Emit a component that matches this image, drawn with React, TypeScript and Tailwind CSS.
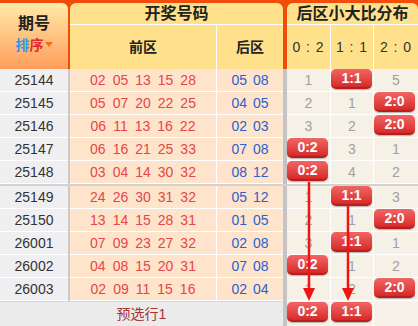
import React from "react";

type Cell = number | string;
const rows: { id: string; f: string[]; b: string[]; d: Cell[] }[] = [
  { id: "25144", f: ["02", "05", "13", "15", "28"], b: ["05", "08"], d: [1, "1:1", 5] },
  { id: "25145", f: ["05", "07", "20", "22", "25"], b: ["04", "05"], d: [2, 1, "2:0"] },
  { id: "25146", f: ["06", "11", "13", "16", "22"], b: ["02", "03"], d: [3, 2, "2:0"] },
  { id: "25147", f: ["06", "16", "21", "25", "33"], b: ["07", "08"], d: ["0:2", 3, 1] },
  { id: "25148", f: ["03", "04", "14", "30", "32"], b: ["08", "12"], d: ["0:2", 4, 2] },
  { id: "25149", f: ["24", "26", "30", "31", "32"], b: ["05", "12"], d: [1, "1:1", 3] },
  { id: "25150", f: ["13", "14", "15", "28", "31"], b: ["01", "05"], d: [2, 1, "2:0"] },
  { id: "26001", f: ["07", "09", "23", "27", "32"], b: ["02", "08"], d: [3, "1:1", 1] },
  { id: "26002", f: ["04", "08", "15", "20", "31"], b: ["07", "08"], d: ["0:2", 1, 2] },
  { id: "26003", f: ["02", "09", "11", "15", "16"], b: ["02", "04"], d: [1, 2, "2:0"] },
];

const distW = ["w-[43px]", "w-[42px]", "w-[44px]"];

function Badge({ t }: { t: string }) {
  return (
    <div className="w-[41px] h-[20px] rounded-[5px] bg-gradient-to-b from-[#f26464] to-[#d62828] border-b-2 border-[#b81e1e] text-white font-bold text-[14px] leading-[18px] text-center shadow-[0_1px_1px_rgba(0,0,0,0.25)]">
      {t}
    </div>
  );
}

function DistCell({ v, i }: { v: Cell | null; i: number }) {
  return (
    <div
      className={`${distW[i]} h-full flex ${
        typeof v === "string" ? "items-start justify-start" : "items-center justify-center"
      }`}
    >
      {typeof v === "string" ? (
        <Badge t={v} />
      ) : v === null ? null : (
        <span className="text-[14px] text-[#a0a0a0]">{v}</span>
      )}
    </div>
  );
}

function Row({ r }: { r: (typeof rows)[number] }) {
  return (
    <div className="flex h-[23px]">
      <div className="w-[68px] bg-[#efeff1] border-b border-white flex items-center justify-center text-[14px] text-[#333]">
        {r.id}
      </div>
      <div className="w-[2px] bg-[#c9c9c9]" />
      <div className="w-[146px] bg-[#ffe4cc] border-b border-white flex items-center justify-center gap-[7px] text-[14px] text-[#e54646]">
        {r.f.map((n, k) => (
          <span key={k}>{n}</span>
        ))}
      </div>
      <div className="w-[1px] bg-white" />
      <div className="w-[66px] bg-[#ffe4cc] border-b border-white flex items-center justify-center gap-[6px] text-[14px] text-[#2f5fc9]">
        {r.b.map((n, k) => (
          <span key={k}>{n}</span>
        ))}
      </div>
      <div className="w-[4px] bg-[#c4c4c4]" />
      <div className="flex bg-[#f6f1e6] border-b border-white">
        <DistCell v={r.d[0]} i={0} />
        <div className="w-[1px] bg-white" />
        <DistCell v={r.d[1]} i={1} />
        <div className="w-[1px] bg-white" />
        <DistCell v={r.d[2]} i={2} />
      </div>
    </div>
  );
}

export default function App() {
  return (
    <div
      className="relative w-[418px] h-[326px] overflow-hidden bg-white"
      style={{ fontFamily: '"Liberation Sans", "Noto Sans CJK SC", sans-serif' }}
    >
      {/* header */}
      <div className="flex h-[69px] bg-[#f24c0a] pt-[3px]">
        <div className="w-[68px] rounded-tr-[6px] bg-gradient-to-b from-[#ffeaa6] to-[#ff9c5c] flex flex-col items-center pt-[11px]">
          <div className="text-[16px] font-bold text-[#222] leading-[20px]">期号</div>
          <div className="flex items-center mt-[2px] text-[14px] font-bold leading-[18px]">
            <span className="text-[#3097ea]">排</span>
            <span className="text-[#e02a2a]">序</span>
            <svg width="8" height="6" viewBox="0 0 8 6" className="ml-[1px]">
              <path d="M0 0 H8 L4 5 Z" fill="#ff6a10" />
            </svg>
          </div>
        </div>
        <div className="w-[2px]" />
        <div className="w-[213px] rounded-t-[6px] bg-[#ffe18b] flex flex-col">
          <div className="h-[21px] flex items-center justify-center text-[16px] font-bold text-[#222]">开奖号码</div>
          <div className="h-[1px] bg-white" />
          <div className="flex flex-1">
            <div className="w-[146px] flex items-center justify-center text-[14px] font-bold text-[#222]">前区</div>
            <div className="w-[1px] bg-white" />
            <div className="w-[66px] flex items-center justify-center text-[14px] font-bold text-[#222]">后区</div>
          </div>
        </div>
        <div className="w-[4px]" />
        <div className="w-[131px] rounded-t-[6px] bg-[#ffe18b] flex flex-col">
          <div className="h-[21px] flex items-center justify-center text-[16px] font-bold text-[#222]">后区小大比分布</div>
          <div className="h-[1px] bg-white" />
          <div className="flex flex-1 text-[14px] text-[#333] tracking-[1px]">
            <div className="w-[43px] flex items-center justify-center">0 : 2</div>
            <div className="w-[1px] bg-white" />
            <div className="w-[42px] flex items-center justify-center">1 : 1</div>
            <div className="w-[1px] bg-white" />
            <div className="w-[44px] flex items-center justify-center">2 : 0</div>
          </div>
        </div>
      </div>

      {rows.slice(0, 5).map((r) => (
        <Row key={r.id} r={r} />
      ))}
      <div className="h-[2px] bg-[#d2d2d2]" />
      {rows.slice(5).map((r) => (
        <Row key={r.id} r={r} />
      ))}

      {/* footer */}
      <div className="flex h-[25px]">
        <div className="w-[283px] bg-[#ebebeb] border-t border-[#d6d6d6] flex items-center justify-center text-[14px] text-[#a83232]">
          预选行1
        </div>
        <div className="w-[4px] bg-[#c4c4c4]" />
        <div className="flex bg-[#f6f1e6] pt-[1px]">
          <DistCell v={"0:2"} i={0} />
          <div className="w-[1px] bg-white" />
          <DistCell v={"1:1"} i={1} />
          <div className="w-[1px] bg-white" />
          <DistCell v={null} i={2} />
        </div>
      </div>

      {/* arrows */}
      <svg className="absolute left-0 top-0 pointer-events-none" width="418" height="326">
        <line x1="309" y1="182" x2="309" y2="292" stroke="#ee1515" strokeWidth="2.5" />
        <path d="M303 288 L315 288 L309 301 Z" fill="#ee1515" />
        <line x1="348" y1="205" x2="348" y2="292" stroke="#ee1515" strokeWidth="2.5" />
        <path d="M342 288 L354 288 L348 301 Z" fill="#ee1515" />
      </svg>
    </div>
  );
}
